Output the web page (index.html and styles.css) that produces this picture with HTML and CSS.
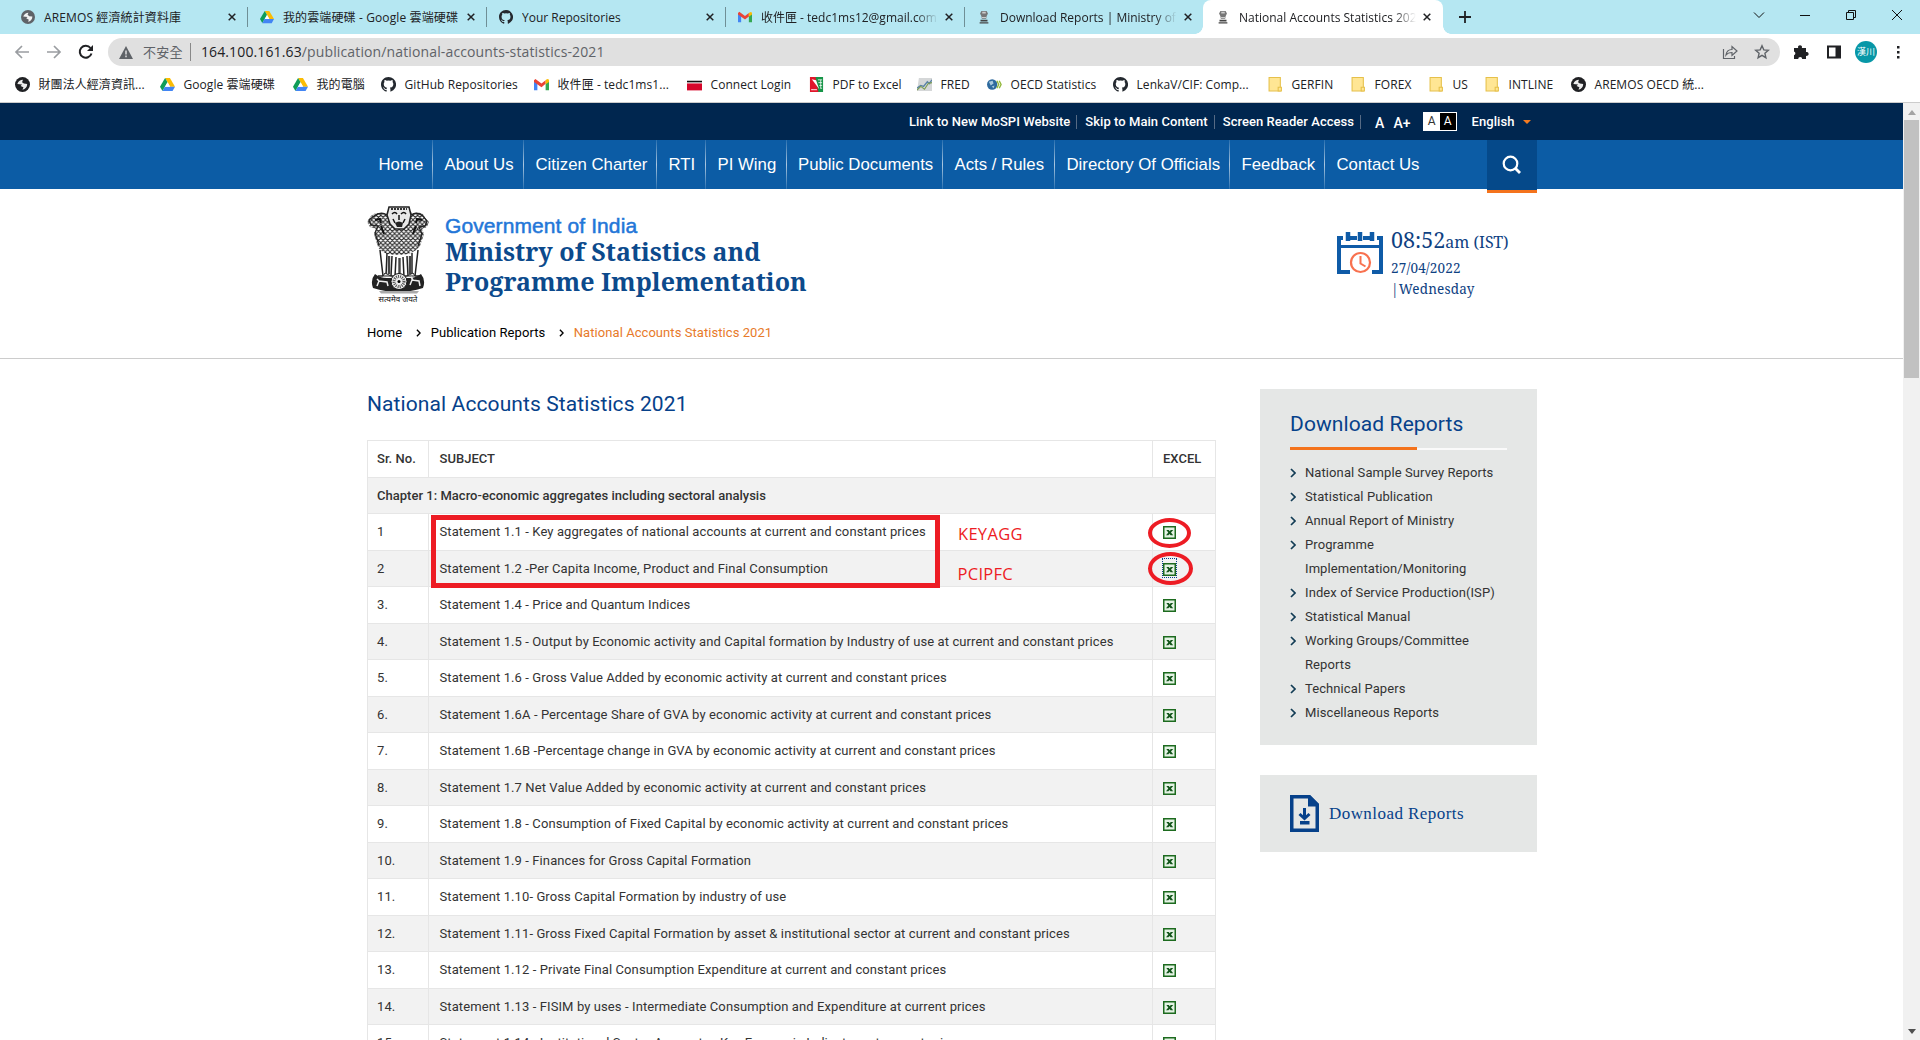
FILE: index.html
```html
<!DOCTYPE html>
<html lang="en">
<head>
<meta charset="utf-8">
<title>National Accounts Statistics 2021</title>
<link rel="stylesheet" href="styles.css">
</head>
<body>
<svg class="defs" width="0" height="0">
  <defs>
    <symbol id="globe" viewBox="0 0 16 16"><circle cx="8" cy="8" r="8" fill="currentColor"/><path d="M2.500 7.500C3.500 4.500 6 3 8.500 3L7.500 5.500l2 1.500 3.500.5C13 11 11 13 8 13.500l1-2.500-3-1.500 1.500-1.500z" fill="#fff" opacity=".92"/></symbol>
    <symbol id="drive" viewBox="0 0 16 14"><path d="M5.400 0h5.200L16 9.300h-5.200z" fill="#fbbc04"/><path d="M5.400 0L0 9.300l2.600 4.600L8 4.600z" fill="#0f9d58"/><path d="M5.200 9.300H16L13.400 14H2.600z" fill="#4285f4"/><path d="M5.400 9.300L8 4.700l2.700 4.600z" fill="#fff"/></symbol>
    <symbol id="github" viewBox="0 0 16 16"><path fill="#24292f" d="M8 0C3.580 0 0 3.580 0 8c0 3.540 2.290 6.530 5.470 7.590.4.070.55-.17.55-.38v-1.490c-2.010.37-2.530-.49-2.690-.94-.09-.23-.48-.94-.82-1.130-.28-.15-.68-.52-.01-.53.63-.01 1.080.58 1.230.82.72 1.210 1.870.87 2.330.66.070-.52.28-.87.51-1.070-1.780-.2-3.640-.89-3.640-3.950 0-.87.31-1.590.82-2.150-.08-.2-.36-1.020.08-2.120 0 0 .67-.21 2.200.82a7.400 7.400 0 0 1 4 0c1.530-1.040 2.200-.82 2.200-.82.44 1.100.16 1.920.08 2.120.51.560.82 1.270.82 2.150 0 3.070-1.870 3.750-3.650 3.950.29.250.54.730.54 1.480v2.200c0 .21.150.46.550.38A8 8 0 0 0 8 0z"/></symbol>
    <symbol id="gmail" viewBox="0 0 16 12"><path d="M0 1.500V12h3.600V5z" fill="#4285f4"/><path d="M16 1.500V12h-3.600V5z" fill="#34a853"/><path d="M0 1.500L1.500 0 8 4.800 12.400 1.500V5.300L8 8.800 0 3.200z" fill="#ea4335"/><path d="M12.400 1.300Q16-1.300 16 2v1.200l-3.600 2.400z" fill="#fbbc04"/></symbol>
    <symbol id="pillar" viewBox="0 0 12 16"><path d="M3 1h6l1.500 3L9 7l-.5 3h-5L3 7 1.500 4z" fill="#777"/><path d="M4 2h4v2H4zM3.500 8h5v1h-5z" fill="#ccc"/><path d="M2 11h8v2H2zM1 14h10v1.500H1z" fill="#444"/></symbol>
    <symbol id="folder" viewBox="0 0 14 14"><path d="M1 .5h10.500V13H1z" fill="#ffe694" stroke="#e6c04a"/><path d="M9.500 9.500h3V13h-3z" fill="#ffe694" stroke="#e6c04a"/></symbol>
    <symbol id="cross" viewBox="0 0 8 8"><path d="M.7.7l6.600 6.600M7.300.7L.7 7.300" stroke="#202124" stroke-width="1.500" fill="none"/></symbol>
    <symbol id="arrow" viewBox="0 0 6 10"><path d="M1 1l4 4-4 4" stroke="currentColor" stroke-width="1.700" fill="none"/></symbol>
    <symbol id="excel" viewBox="0 0 13 13"><path d="M.75.75h11.500v11.500H.75z" fill="#e4f3e4" stroke="#1d6b1f" stroke-width="1.500"/><path d="M3.300 4h2.500l.9 1.200L7.800 4h2.400L8 6.500 10.200 9.200H7.600L6.500 7.900 5.400 9.200H3l2.300-2.700z" fill="#12551a"/></symbol>
  </defs>
</svg>

<div class="tabs">
  <div class="tab"><svg class="ico gray"><use href="#globe"/></svg><span class="tab-text wide">AREMOS 經濟統計資料庫</span><svg class="x"><use href="#cross"/></svg></div>
  <div class="tab"><svg class="ico"><use href="#drive"/></svg><span class="tab-text wide">我的雲端硬碟 - Google 雲端硬碟</span><svg class="x"><use href="#cross"/></svg></div>
  <div class="tab"><svg class="ico"><use href="#github"/></svg><span class="tab-text">Your Repositories</span><svg class="x"><use href="#cross"/></svg></div>
  <div class="tab"><svg class="ico"><use href="#gmail"/></svg><span class="tab-text fade">收件匣 - tedc1ms12@gmail.com</span><svg class="x"><use href="#cross"/></svg></div>
  <div class="tab plain"><svg class="ico"><use href="#pillar"/></svg><span class="tab-text fade">Download Reports | Ministry of</span><svg class="x"><use href="#cross"/></svg></div>
  <div class="tab active"><svg class="ico"><use href="#pillar"/></svg><span class="tab-text fade">National Accounts Statistics 202</span><svg class="x"><use href="#cross"/></svg></div>
  <svg class="newtab" viewBox="0 0 12 12"><path d="M6 0v12M0 6h12" stroke="#202124" stroke-width="1.800"/></svg>
  <div class="winctl">
    <svg viewBox="0 0 12 12"><path d="M1 3.500l5 5 5-5" fill="none" stroke="#111"/></svg>
    <svg viewBox="0 0 12 12"><path d="M1 6.500h10" stroke="#111"/></svg>
    <svg viewBox="0 0 12 12"><path d="M1.500 3.500h7v7h-7zM3.500 3.500v-2h7v7h-2" fill="none" stroke="#111"/></svg>
    <svg viewBox="0 0 12 12"><path d="M1 1l10 10M11 1L1 11" stroke="#111"/></svg>
  </div>
</div>

<div class="toolbar">
  <svg class="nav-ico" viewBox="0 0 16 16"><path d="M15 8H2M8 2L2 8l6 6" fill="none" stroke="#9a9da1" stroke-width="1.700"/></svg>
  <svg class="nav-ico" viewBox="0 0 16 16"><path d="M1 8h13M8 2l6 6-6 6" fill="none" stroke="#9a9da1" stroke-width="1.700"/></svg>
  <svg class="nav-ico" viewBox="0 0 16 16"><path d="M13.500 9.500A6 6 0 1 1 12.500 4" fill="none" stroke="#202124" stroke-width="2"/><path d="M15 1v6H9z" fill="#202124"/></svg>
  <div class="urlbar">
    <svg class="warn" viewBox="0 0 14 13"><path d="M7 0l7 13H0z" fill="#5f6368"/><path d="M7 4.500v4M7 9.600v1.600" stroke="#e0e0e0" stroke-width="1.500"/></svg>
    <span class="insecure">不安全</span>
    <span class="url"><b>164.100.161.63</b>/publication/national-accounts-statistics-2021</span>
    <svg class="share" viewBox="0 0 16 16"><path d="M1.500 5v9.500h11V12M4 11c.5-4 3-5.500 6-5.500V2.500l5 4.500-5 4.500V8.500C7 8.500 5.500 9 4 11z" fill="none" stroke="#5f6368" stroke-width="1.200"/></svg>
    <svg class="star" viewBox="0 0 16 16"><path d="M8 1.800l1.800 4.100 4.500.4-3.400 3 1 4.400L8 11.300l-3.900 2.400 1-4.400-3.400-3 4.500-.4z" fill="none" stroke="#5f6368" stroke-width="1.400"/></svg>
  </div>
  <svg class="t-ico" viewBox="0 0 16 16"><path d="M1 4h4.200a2 2 0 1 1 3.600 0H13v4a2 2 0 1 1 0 3.800V15H9.200a2 2 0 0 0-4 0H1v-3.800a2 2 0 0 0 0-3.800z" fill="#202124"/></svg>
  <svg class="t-ico" viewBox="0 0 16 16"><path d="M2 2.500h12v11H2z" fill="none" stroke="#202124" stroke-width="2"/><path d="M9.500 2h5v12h-5z" fill="#202124"/></svg>
  <span class="avatar">漢川</span>
  <svg class="t-ico" viewBox="0 0 16 16"><path d="M7 2h2.500v2.500H7zM7 7h2.500v2.500H7zM7 12h2.500v2.500H7z" fill="#202124"/></svg>
</div>

<div class="bookmarks">
  <span><svg><use href="#globe"/></svg>財團法人經濟資訊...</span>
  <span><svg><use href="#drive"/></svg>Google 雲端硬碟</span>
  <span><svg><use href="#drive"/></svg>我的電腦</span>
  <span><svg><use href="#github"/></svg>GitHub Repositories</span>
  <span><svg><use href="#gmail"/></svg>收件匣 - tedc1ms1...</span>
  <span><svg viewBox="0 0 14 14"><path d="M0 3.500h14v1.500H0z" fill="#111"/><path d="M0 6h14v6.500H0z" fill="#d5072b"/></svg>Connect Login</span>
  <span><svg viewBox="0 0 14 16"><path d="M0 0h7l3 16H0z" fill="#e0162b"/><path d="M6 0h8v16H9z" fill="#159447"/><path d="M2 2.500l4.500 1L10 13z" fill="#fff"/><path d="M8.500 3H13M9 6h4M10 9h3M11 12h2M11.500 3v9" stroke="#fff" stroke-width=".8"/><path d="M1.500 13.500h6" stroke="#fff" stroke-width="1.200" stroke-dasharray="1.500 .6"/></svg>PDF to Excel</span>
  <span><svg viewBox="0 0 16 14"><path d="M2 0h14v14H0z" fill="#d5d7d8"/><path d="M0 11l4-3 3 1 4-5 2 2 3-4" fill="none" stroke="#5a83a5" stroke-width="1.500"/><path d="M0 13l4-4 4 3 4-6 4-1" fill="none" stroke="#7b9b50" stroke-width="1.200"/></svg>FRED</span>
  <span><svg viewBox="0 0 16 12"><circle cx="5.500" cy="6" r="5.500" fill="#2e6a9e"/><path d="M2 3l4-1 1 3-3 2zM5 8l3-1-1 3z" fill="#a9c9dd"/><path d="M10.500 2l2 4-2 4M13 2l2 4-2 4" fill="none" stroke="#93b83c" stroke-width="1.500"/></svg>OECD Statistics</span>
  <span><svg><use href="#github"/></svg>LenkaV/CIF: Comp...</span>
  <span><svg><use href="#folder"/></svg>GERFIN</span>
  <span><svg><use href="#folder"/></svg>FOREX</span>
  <span><svg><use href="#folder"/></svg>US</span>
  <span><svg><use href="#folder"/></svg>INTLINE</span>
  <span><svg><use href="#globe"/></svg>AREMOS OECD 統...</span>
</div>

<div class="viewport">
<div class="page">
  <div class="topbar"><div class="wrap top-in">
    <a>Link to New MoSPI Website</a><a>Skip to Main Content</a><a>Screen Reader Access</a>
    <span class="fs">A</span><span class="fs plus">A+</span>
    <span class="contrast"><i>A</i><i class="dark">A</i></span>
    <span class="lang">English</span><span class="caret"></span>
  </div></div>

  <div class="navbar"><div class="wrap nav-in">
    <a>Home</a><a>About Us</a><a>Citizen Charter</a><a>RTI</a><a>PI Wing</a><a>Public Documents</a><a>Acts / Rules</a><a>Directory Of Officials</a><a>Feedback</a><a>Contact Us</a>
    <span class="search"><svg viewBox="0 0 20 20"><circle cx="8.500" cy="8.500" r="6.800" fill="none" stroke="#fff" stroke-width="2.200"/><path d="M13.500 13.500l4.500 4.500" stroke="#fff" stroke-width="2.800"/></svg></span>
  </div></div>

  <header class="masthead"><div class="wrap">
    <div class="brand-row">
      <div class="emblem">
        <svg viewBox="0 0 62 88">
          <defs><pattern id="fur" width="4.600" height="4.600" patternUnits="userSpaceOnUse"><path d="M0 0q2.300 3.400 4.600 0M-2.300 2.300q2.300 3.400 4.600 0q2.300 3.400 4.600 0" fill="none" stroke="#1a1a1a" stroke-width="1.100"/></pattern></defs>
          <path d="M22 1h20l3 7q6-3 11 0l2 4 4 4-2 5-5 2 2 5-4 12-2 9-2 19H15l-4-19-3-12-3-9 2-5-5-2-2-5 4-6q5-5 12-2l3 1z" fill="#fff"/>
          <path d="M22 1h20l3 7q6-3 11 0l2 4 4 4-2 5-5 2 2 5-4 12q-6 9-22 9T11 41L7 28l2-5-6-2-3-5 4-6q5-5 12-2l3 1z" fill="url(#fur)"/>
          <path d="M20 9q-6-4-13 1l-5 4 2 5 7 1-3 7 4 12M44 9q6-4 12 1l4 5-2 5-6 1 3 7-4 12" fill="none" stroke="#222" stroke-width="1.300"/>
          <path d="M22 1h20l2 8-2 9-5 5h-9l-5-5-3-9z" fill="#e8e8e8" stroke="#222" stroke-width="1.500"/>
          <path d="M25 8q3-3 5 0M34 8q3-3 5 0M32 9v5M26 13l2 4M38 13l-2 4" fill="none" stroke="#111" stroke-width="1.500"/>
          <path d="M28 17q4-3 8 0l-1 4h-5z" fill="#222"/><path d="M24 3h16" stroke="#333" stroke-width="2" stroke-dasharray="2 1"/>
          <path d="M8 14l5-1 1 4M55 14l-5-1-1 4M14 20l3 8M49 20l-3 8" fill="none" stroke="#111" stroke-width="2"/>
          <path d="M13 44l3 26M20 47l-1 23M25 50l-1 20M29 51l-1 20M36 51l1 20M40 50l1 20M45 47v23M51 44l-3 26" fill="none" stroke="#222" stroke-width="1.500"/>
          <path d="M22 50v18M32.500 52v18M43 50v18" stroke="#444" stroke-width="2.400"/>
          <path d="M11 70h5l2-3 6 3h16l6-3 2 3h5z" fill="#eee" stroke="#222"/>
          <path d="M8 68q-5 6-2 14 25 8 50 0 3-8-2-14-6 4-11 4H20q-7 0-12-4z" fill="#222"/>
          <circle cx="32" cy="75.500" r="8" fill="#eee" stroke="#111"/><circle cx="32" cy="75.500" r="5" fill="none" stroke="#555" stroke-width="3" stroke-dasharray="1 1"/><circle cx="32" cy="75.500" r="1.500"/>
          <path d="M10 80l2-5 8 1 1 4M12 75l-2-2M43 79l2-5 7 1 1 5M46 74l-2-3" fill="none" stroke="#eee" stroke-width="1.500"/>
          <path d="M12 85h40l-2 2.500H14z" fill="#aaa"/>
        </svg>
        <span>सत्यमेव जयते</span>
      </div>
      <div class="brand"><div class="goi">Government of India</div><div class="mospi">Ministry of Statistics and<br>Programme Implementation</div></div>
      <div class="clock">
        <svg viewBox="0 0 46 44"><path d="M13 41H2V7h4M11 7h9M26 7h9M40 7h4v34h-9" fill="none" stroke="#0f5ba7" stroke-width="4"/><path d="M2 15.500h42" stroke="#0f5ba7" stroke-width="3"/><path d="M11 1v9M23 1v9M35 1v9" stroke="#0f5ba7" stroke-width="4.500"/><circle cx="23.500" cy="31.500" r="9.500" fill="#fff" stroke="#f8714f" stroke-width="2.200"/><path d="M23.500 25v7.500l5 3" fill="none" stroke="#f8714f" stroke-width="2"/></svg>
        <div><div class="time"><big>08:52</big>am (IST)</div><div class="date">27/04/2022</div><div class="day">|Wednesday</div></div>
      </div>
    </div>
    <div class="crumbs"><a>Home</a><svg><use href="#arrow"/></svg><a>Publication Reports</a><svg><use href="#arrow"/></svg><a class="here">National Accounts Statistics 2021</a></div>
  </div></header>

  <div class="wrap content">
    <main>
      <h1>National Accounts Statistics 2021</h1>
      <div class="table">
        <div class="row head"><span>Sr. No.</span><span>SUBJECT</span><span>EXCEL</span></div>
        <div class="row chapter"><span>Chapter 1: Macro-economic aggregates including sectoral analysis</span></div>
        <div class="row"><span>1</span><span>Statement 1.1 - Key aggregates of national accounts at current and constant prices</span><span><svg><use href="#excel"/></svg></span></div>
        <div class="row"><span>2</span><span>Statement 1.2 -Per Capita Income, Product and Final Consumption</span><span><svg><use href="#excel"/></svg></span></div>
        <div class="row"><span>3.</span><span>Statement 1.4 - Price and Quantum Indices</span><span><svg><use href="#excel"/></svg></span></div>
        <div class="row"><span>4.</span><span>Statement 1.5 - Output by Economic activity and Capital formation by Industry of use at current and constant prices</span><span><svg><use href="#excel"/></svg></span></div>
        <div class="row"><span>5.</span><span>Statement 1.6 - Gross Value Added by economic activity at current and constant prices</span><span><svg><use href="#excel"/></svg></span></div>
        <div class="row"><span>6.</span><span>Statement 1.6A - Percentage Share of GVA by economic activity at current and constant prices</span><span><svg><use href="#excel"/></svg></span></div>
        <div class="row"><span>7.</span><span>Statement 1.6B -Percentage change in GVA by economic activity at current and constant prices</span><span><svg><use href="#excel"/></svg></span></div>
        <div class="row"><span>8.</span><span>Statement 1.7 Net Value Added by economic activity at current and constant prices</span><span><svg><use href="#excel"/></svg></span></div>
        <div class="row"><span>9.</span><span>Statement 1.8 - Consumption of Fixed Capital by economic activity at current and constant prices</span><span><svg><use href="#excel"/></svg></span></div>
        <div class="row"><span>10.</span><span>Statement 1.9 - Finances for Gross Capital Formation</span><span><svg><use href="#excel"/></svg></span></div>
        <div class="row"><span>11.</span><span>Statement 1.10- Gross Capital Formation by industry of use</span><span><svg><use href="#excel"/></svg></span></div>
        <div class="row"><span>12.</span><span>Statement 1.11- Gross Fixed Capital Formation by asset &amp; institutional sector at current and constant prices</span><span><svg><use href="#excel"/></svg></span></div>
        <div class="row"><span>13.</span><span>Statement 1.12 - Private Final Consumption Expenditure at current and constant prices</span><span><svg><use href="#excel"/></svg></span></div>
        <div class="row"><span>14.</span><span>Statement 1.13 - FISIM by uses - Intermediate Consumption and Expenditure at current prices</span><span><svg><use href="#excel"/></svg></span></div>
        <div class="row"><span>15.</span><span>Statement 1.14 - Institutional Sector Accounts - Key Economic Indicators at current prices</span><span><svg><use href="#excel"/></svg></span></div>
      </div>
    </main>
    <aside>
      <section class="side">
        <h2>Download Reports</h2>
        <ul>
          <li><svg><use href="#arrow"/></svg>National Sample Survey Reports</li>
          <li><svg><use href="#arrow"/></svg>Statistical Publication</li>
          <li><svg><use href="#arrow"/></svg>Annual Report of Ministry</li>
          <li><svg><use href="#arrow"/></svg>Programme<br>Implementation/Monitoring</li>
          <li><svg><use href="#arrow"/></svg>Index of Service Production(ISP)</li>
          <li><svg><use href="#arrow"/></svg>Statistical Manual</li>
          <li><svg><use href="#arrow"/></svg>Working Groups/Committee<br>Reports</li>
          <li><svg><use href="#arrow"/></svg>Technical Papers</li>
          <li><svg><use href="#arrow"/></svg>Miscellaneous Reports</li>
        </ul>
      </section>
      <section class="dl">
        <svg viewBox="0 0 29 37"><path d="M1.750 1.750h17.500l8 8v25.500H1.750z" fill="none" stroke="#06418a" stroke-width="3.500"/><path d="M18 0h2l9 9v2.500H18z" fill="#06418a"/><path d="M14.500 13v9M9.500 19l5 4.500 5-4.500" fill="none" stroke="#06418a" stroke-width="3"/><path d="M10 26h9.500v3.500H10z" fill="#06418a"/></svg>
        <span>Download Reports</span>
      </section>
    </aside>
  </div>
</div>
<div class="scrollbar"><i class="up"></i><i class="thumb"></i><i class="down"></i></div>
</div>

<div class="mark-box"></div>
<span class="mark-text key">KEYAGG</span>
<span class="mark-text pci">PCIPFC</span>
<div class="mark-ring one"></div>
<div class="focus"></div>
<div class="mark-ring two"></div>
</body>
</html>
```

FILE: styles.css
```css
*{box-sizing:border-box}
body{margin:0;width:1920px;height:1040px;overflow:hidden;display:flex;flex-direction:column;position:relative;background:#fff;color:#333;font:13px/18px Roboto,sans-serif}
.defs{position:absolute}
svg{display:block;flex:none}
a{white-space:nowrap}

/* browser chrome */
.tabs,.toolbar,.bookmarks{font-family:"Open Sans","Noto Sans CJK TC",sans-serif;font-size:12px;color:#202124;flex:none}
.tabs{height:34px;background:#b5e7f2;padding-left:8px;display:flex;align-items:center}
.tab{width:239px;height:34px;padding-left:13px;display:flex;align-items:center;position:relative}
.tab::after{content:"";position:absolute;right:-1px;top:7px;width:1px;height:20px;background:#6f8f96}
.tab.plain::after,.tab.active::after{display:none}
.ico{width:14px;height:14px;margin-right:9px}
.gray{color:#5f6368}
.tab-text{width:177px;margin-right:7px;padding-top:1px;white-space:nowrap;overflow:hidden}
.tab-text.wide{letter-spacing:.12px}
.fade{-webkit-mask:linear-gradient(90deg,#000 155px,transparent 177px);mask:linear-gradient(90deg,#000 155px,transparent 177px)}
.x{width:8px;height:8px}
.active{width:240px;background:#fff;border-radius:8px 8px 0 0}
.active::before{content:"";position:absolute;left:-8px;right:-8px;bottom:0;height:8px;background:radial-gradient(circle at 0 0,transparent 7.5px,#fff 8px) left/8px 8px no-repeat,radial-gradient(circle at 100% 0,transparent 7.5px,#fff 8px) right/8px 8px no-repeat}
.newtab{width:12px;height:12px;margin:0 0 0 16px}
.winctl{display:flex;gap:34px;margin:-5px 17px 0 auto}
.winctl svg{width:12px;height:12px}
.toolbar{height:36px;padding:0 14px;display:flex;align-items:center}
.nav-ico{width:16px;height:16px;margin-right:16px}
.nav-ico+.nav-ico+.nav-ico{margin-right:14px}
.urlbar{width:1672px;flex:none;height:28px;border-radius:14px;background:#e0e0e0;display:flex;align-items:center;padding:0 10px 0 11px;margin-right:13px;font-size:14px;color:#5f6368}
.warn{width:14px;height:13px;margin-right:10px}
.insecure{font-size:13px;letter-spacing:.3px;padding-right:7px;border-right:1px solid #888;line-height:18px}
.url{margin-left:10px;letter-spacing:.13px}
.url b{font-weight:400;color:#202124}
.share{width:16px;height:16px;margin-left:auto;margin-right:16px}
.star{width:16px;height:16px}
.t-ico{width:16px;height:16px;margin-right:17px}
.avatar{width:22px;height:22px;border-radius:50%;background:#0797a7;color:#fff;font-size:9px;line-height:21px;text-align:center;margin:0 13px 0 -4px;overflow:hidden;flex:none}
.toolbar>.t-ico:last-child{margin:0}
.bookmarks{height:33px;padding-left:15px;padding-bottom:3px;border-bottom:1px solid #ccc;display:grid;align-items:center;grid-template-columns:145px 133px 88px 153px 153px 122px 108px 70px 126px 155px 83px 78px 56px 86px 160px}
.bookmarks span{display:flex;align-items:center;white-space:nowrap;letter-spacing:.07px}
.bookmarks svg{width:15px;height:15px;margin-right:8.500px}

/* page */
.viewport{flex:1;display:flex;min-height:0}
.page{width:1903px;overflow:hidden}
.wrap{width:1170px;margin:0 auto 0 367px}
.topbar{height:37px;background:#00264f}
.top-in{height:37px;padding-left:542px;display:flex;align-items:center;color:#fff;font-weight:500;letter-spacing:.05px}
.top-in a{padding-right:6px;border-right:1px solid #566a84;line-height:14px;margin-right:8px}
.top-in a:nth-child(3){margin-right:14px}
.fs{font-size:14px;padding-top:2px}
.plus{margin-left:9px}
.contrast{display:flex;border:1px solid #fff;height:19px;margin:0 15px 0 12px;background:#fff}
.contrast i{width:16px;font:400 12px/17px Roboto,sans-serif;text-align:center;color:#333}
.contrast .dark{background:#000;color:#fff}
.caret{border:4px solid transparent;border-top-color:#f47b20;border-bottom:0;margin-left:9px}
.navbar{height:49px;background:#0c5ca5}
.nav-in{height:49px;display:grid;grid-template-columns:66px 91px 133px 49px 80.500px 156.500px 112px 175px 94.500px 162.500px 50px;font:16.800px/49px "Liberation Sans",Arial,sans-serif;color:#fff}
.nav-in a{height:49px;padding:1px 0 0 11.500px;line-height:48px;border-right:1px solid;border-image:linear-gradient(rgba(255,255,255,.1),rgba(255,255,255,.65) 50%,rgba(255,255,255,.1)) 1}
.nav-in a:nth-child(10){border:0;padding-left:12px}
.search{height:53px;background:#05498a;border-bottom:3px solid #f4731c;display:flex;align-items:center;justify-content:center}
.search svg{width:20px;height:20px}
.masthead{height:170px;border-bottom:1px solid #ccc}
.brand-row{display:flex;height:134px}
.emblem{width:62px;padding-top:17px;text-align:center}
.emblem svg{width:62px;height:88px}
.emblem span{display:block;font:8px/9px "Noto Sans","Noto Sans Devanagari",sans-serif;color:#111;white-space:nowrap}
.brand{padding:26px 0 0 16px;white-space:nowrap}
.goi{font:21px/21px "Liberation Sans",Arial,sans-serif;letter-spacing:.1px;color:#2376d8;-webkit-text-stroke:.5px #2376d8}
.mospi{font:bold 25px/30px "Noto Serif","DejaVu Serif",serif;color:#0c4a8c}
.clock{margin:0 24px 0 auto;padding-top:37px;display:flex;gap:8px;font-family:"Noto Serif","DejaVu Serif",serif;color:#0e4182;width:176px;white-space:nowrap}
.clock svg{width:46px;height:44px;margin-top:5px}
.time{font-size:16px;line-height:28px}
.time big{font-size:21.500px}
.date,.day{font-size:13.500px;line-height:21px}
.date{padding-top:2px}
.day{padding-left:0;letter-spacing:.2px}
.date{letter-spacing:.15px}
.crumbs{display:flex;align-items:center;height:20px;color:#000;letter-spacing:.06px}
.crumbs svg{width:5px;height:8px;margin:0 10px 0 13.500px}
.crumbs .here{color:#e77a2a}
.content{display:flex;justify-content:space-between}
main{width:849px}
h1,h2{font-weight:400;font-size:21px;letter-spacing:.1px;color:#06418a;margin:0}
h1{line-height:30px;padding-top:30px;height:81px}
.table{border:1px solid #e6e6e6;border-bottom:0}
.row{display:grid;grid-template-columns:61px 724px 1fr;height:36.500px;border-bottom:1px solid #e6e6e6;line-height:35px;letter-spacing:.1px;white-space:nowrap}
.row span{padding-left:9px;border-right:1px solid #e6e6e6}
.row span:nth-child(2){padding-left:10.500px}
.row span:last-child{border:0}
.row span:nth-child(3){padding-left:10px}
.row svg{width:13px;height:13px;margin-top:12px}
.row:nth-child(even){background:#f2f2f2}
.head,.chapter{font-weight:500}
.row.head,.row.chapter{letter-spacing:.02px}
.chapter{grid-template-columns:1fr}
aside{width:277px;padding-top:30px}
.side{height:356px;background:#e5e7e6;padding:20px 30px 0}
.side h2{line-height:30px;height:41px;position:relative;border-bottom:2px solid #fafafa}
.side h2::after{content:"";position:absolute;left:0;bottom:-2px;width:127px;height:3px;background:#f4731c}
.side ul{list-style:none;margin:11px 0 0;padding:0}
.side li{position:relative;padding-left:15px;line-height:24px;letter-spacing:.09px;white-space:nowrap}
.side li svg{position:absolute;left:0;top:7px;width:6px;height:10px;color:#123c55}
.dl{margin-top:30px;height:77px;background:#e5e7e6;padding-left:30px;display:flex;align-items:center;gap:10px;font:17px "Liberation Serif",serif;letter-spacing:.44px;color:#06418a}
.dl svg{width:29px;height:37px}
.scrollbar{width:17px;background:#f1f1f1;display:flex;flex-direction:column;align-items:center}
.up,.down{border:4px solid transparent}
.up{border-bottom:5px solid #a3a3a3;border-top:0;margin:7px 0 5px}
.thumb{width:15px;height:258px;background:#c1c1c1}
.down{border-top:5px solid #505050;border-bottom:0;margin:auto 0 6px}

/* hand-drawn notes over the table */
.mark-box,.mark-ring,.mark-text,.focus{position:absolute}
.mark-box{left:431px;top:515px;width:509px;height:73px;border:5px solid #ed1c24}
.mark-text{font:16.500px/20px "Open Sans",sans-serif;letter-spacing:.3px;color:#ed1c24}
.key{left:958px;top:524px}
.pci{left:957.500px;top:564px}
.mark-ring{border:4px solid #ed1c24;border-radius:50%}
.one{left:1148px;top:518px;width:43px;height:30px}
.two{left:1148px;top:552px;width:45px;height:33px}
.focus{left:1162px;top:558px;width:15px;height:20px;border:1px dotted #06418a}
```
